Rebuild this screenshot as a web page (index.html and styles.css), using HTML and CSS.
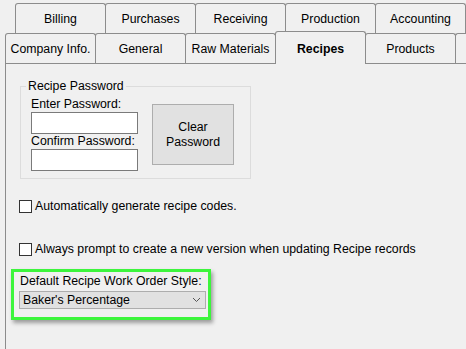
FILE: index.html
```html
<!DOCTYPE html>
<html>
	<head>
		<meta charset="UTF-8">
		<title>Settings - Recipes</title>
		<link rel="stylesheet" href="styles.css">
	</head>
	<body>
		<div class="tabs">
			<div class="tab-row back">
				<div class="tab">Billing</div>
				<div class="tab">Purchases</div>
				<div class="tab">Receiving</div>
				<div class="tab">Production</div>
				<div class="tab">Accounting</div>
			</div>
			<div class="tab-row front">
				<div class="tab">Company Info.</div>
				<div class="tab">General</div>
				<div class="tab">Raw Materials</div>
				<div class="tab active">Recipes</div>
				<div class="tab">Products</div>
				<div class="tab stub"></div>
			</div>
		</div>

		<div class="panel">
			<fieldset class="group">
				<legend>Recipe Password</legend>
				<div class="group-body">
					<div class="fields">
						<div class="field-label">Enter Password:</div>
						<div class="textbox"></div>
						<div class="field-label">Confirm Password:</div>
						<div class="textbox"></div>
					</div>
					<div class="btn">Clear<br>Password</div>
				</div>
			</fieldset>

			<div class="check first"><span class="box"></span>Automatically generate recipe codes.</div>
			<div class="check second"><span class="box"></span>Always prompt to create a new version when updating Recipe records</div>

			<div class="highlight">
				<div class="combo-label">Default Recipe Work Order Style:</div>
				<div class="combo">
					<span>Baker's Percentage</span>
					<svg width="9" height="6" viewBox="0 0 9 6"><polyline points="1,1 4.5,4.5 8,1" fill="none" stroke="#555" stroke-width="1"/></svg>
				</div>
			</div>
		</div>
	</body>
</html>
```

FILE: styles.css
```css
*{
	margin: 0;
	padding: 0;
	box-sizing: border-box;
}
html,body{
	width: 466px;
	height: 349px;
	overflow: hidden;
}
body{
	background-color: #f0f0f0;
	font-family: "Liberation Sans", Arial, sans-serif;
	font-size: 12.3px;
	line-height: 15px;
	color: #000;
}

/* tab strip, two rows */
.tabs{
	height: 63px;
	white-space: nowrap;
}
.tab-row{
	display: flex;
}
.tab-row.back{
	padding-top: 3px;
	padding-left: 15px;
}
.tab-row.front{
	padding-left: 5px;
}
.tab{
	flex: none;
	width: 91px;
	height: 30px;
	margin-right: -1px;
	border: 1px solid #8c8c8c;
	border-bottom: none;
	border-radius: 3px 3px 0 0;
	background-color: #f0f0f0;
	display: flex;
	align-items: center;
	justify-content: center;
	padding-top: 1px;
}
.tab.stub{
	width: 12px;
	border-right: none;
	border-radius: 3px 0 0 0;
}
.tab.active{
	position: relative;
	z-index: 2;
	height: 33px;
	margin-top: -2px;
	font-weight: bold;
	padding-top: 3px;
}

/* page body */
.panel{
	margin-left: 5px;
	height: 286px;
	border-left: 1px solid #8c8c8c;
	border-top: 1px solid #8c8c8c;
	padding-top: 15px;
}

.group{
	margin-left: 14px;
	width: 231px;
	border: 1px solid #dcdcdc;
	padding: 3px 0 7px 10px;
}
.group legend{
	margin-left: -5px;
	padding: 0 2px;
}
.group-body{
	display: flex;
	align-items: flex-start;
}
.fields{
	width: 107px;
}
.textbox{
	height: 22px;
	border: 1px solid #7a7a7a;
	background-color: #fff;
}
.btn{
	margin-left: 14px;
	margin-top: 7px;
	width: 82px;
	height: 61px;
	border: 1px solid #adadad;
	background-color: #e1e1e1;
	display: flex;
	align-items: center;
	justify-content: center;
	text-align: center;
}

.check{
	display: flex;
	align-items: center;
	margin-left: 13px;
	height: 15px;
}
.check.first{
	margin-top: 20px;
}
.check.second{
	margin-top: 28px;
}
.box{
	width: 13px;
	height: 13px;
	border: 1px solid #333;
	background-color: #fff;
	margin-right: 3px;
}

.highlight{
	margin-left: 5px;
	margin-top: 12px;
	width: 200px;
	border: 3px solid #3cf53c;
	padding: 1px 2px 8px 5px;
	box-shadow: 2px 3px 4px rgba(0,0,0,.35);
}
.combo-label{
	padding-left: 1px;
	padding-top: 1px;
}
.combo{
	margin-top: 2px;
	height: 18px;
	border: 1px solid #adadad;
	background-color: #e1e1e1;
	display: flex;
	align-items: center;
	justify-content: space-between;
	padding: 0 4px 0 3px;
}
```
